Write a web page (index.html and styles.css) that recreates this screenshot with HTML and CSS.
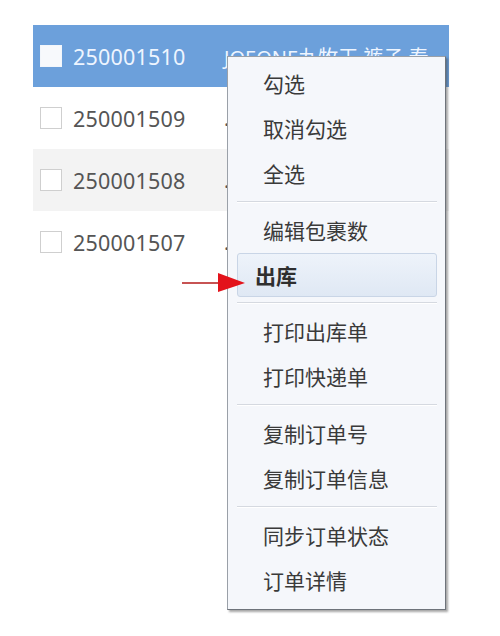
FILE: index.html
```html
<!DOCTYPE html>
<html lang="zh">
<head>
<meta charset="utf-8">
<title>订单右键菜单</title>
<link rel="stylesheet" href="styles.css">
</head>
<body>
<div class="page">
  <div class="table">
    <div class="row selected">
      <span class="check"></span>
      <span class="num">250001510</span>
      <span class="title">JOEONE九牧王 裤子 春</span>
    </div>
    <div class="row">
      <span class="check"></span>
      <span class="num">250001509</span>
      <span class="title">.</span>
    </div>
    <div class="row alt">
      <span class="check"></span>
      <span class="num">250001508</span>
      <span class="title">.</span>
    </div>
    <div class="row">
      <span class="check"></span>
      <span class="num">250001507</span>
      <span class="title">.</span>
    </div>
  </div>

  <ul class="menu">
    <li class="item">勾选</li>
    <li class="item">取消勾选</li>
    <li class="item">全选</li>
    <li class="sep"></li>
    <li class="item">编辑包裹数</li>
    <li class="item active">出库</li>
    <li class="sep"></li>
    <li class="item">打印出库单</li>
    <li class="item">打印快递单</li>
    <li class="sep"></li>
    <li class="item">复制订单号</li>
    <li class="item">复制订单信息</li>
    <li class="sep"></li>
    <li class="item">同步订单状态</li>
    <li class="item">订单详情</li>
  </ul>

  <svg class="arrow" width="66" height="22" viewBox="0 0 66 22">
    <line x1="0" y1="11" x2="40" y2="11" stroke="#b51a1a" stroke-width="1.6"/>
    <polygon points="36,1 63,11 36,20" fill="#e3131b"/>
  </svg>
</div>
</body>
</html>
```

FILE: styles.css
```css
html, body {
  margin: 0;
  padding: 0;
  background: #ffffff;
}

.page {
  position: relative;
  width: 500px;
  height: 636px;
  overflow: hidden;
  font-family: "Noto Sans", "Noto Sans CJK SC", sans-serif;
}

.table {
  position: absolute;
  left: 33px;
  top: 25px;
  width: 416px;
  display: flex;
  flex-direction: column;
}

.row {
  height: 62px;
  display: flex;
  align-items: center;
  padding-left: 7px;
  background: #ffffff;
  color: #555555;
  white-space: nowrap;
  overflow: hidden;
}

.row.selected {
  background: #6ca0db;
  color: #eef5ff;
}

.row.alt {
  background: #f3f3f3;
}

.check {
  width: 20px;
  height: 20px;
  border: 1px solid #cfcfcf;
  background: #ffffff;
  flex: none;
}

.row.selected .check {
  border-color: #f2f6fb;
  background: #f7f9fc;
}

.num {
  margin-left: 11px;
  font-size: 21.5px;
  letter-spacing: 0.2px;
  width: 151px;
  flex: none;
}

.title {
  font-size: 20px;
  font-family: "Noto Sans", "Noto Sans CJK SC", sans-serif;
}

.menu {
  position: absolute;
  left: 227px;
  top: 56px;
  width: 219px;
  margin: 0;
  padding: 4px 0 6px;
  list-style: none;
  background: #f5f7fb;
  border: 1px solid #9aa0a8;
  border-right-color: #6e737a;
  border-bottom-color: #6e737a;
  box-shadow: 2px 2px 2px rgba(60, 60, 60, 0.45);
  box-sizing: border-box;
  height: 554px;
  font-family: "Noto Sans CJK SC", sans-serif;
  font-size: 21px;
  color: #3a3a3a;
}

.item {
  height: 45px;
  line-height: 45px;
  padding-left: 35px;
  box-sizing: border-box;
  white-space: nowrap;
}

.item.active {
  margin: 0 8px 0 9px;
  height: 44px;
  line-height: 42px;
  padding-left: 17px;
  border: 1px solid #c9d5e6;
  border-radius: 3px;
  background: linear-gradient(#eef3fa, #dfe8f4);
  font-weight: bold;
  color: #2f2f2f;
}

.sep {
  height: 12px;
  margin: 0 8px 0 9px;
  position: relative;
}

.sep::before {
  content: "";
  position: absolute;
  left: 0;
  right: 0;
  top: 5px;
  height: 1px;
  background: #d5d9e0;
  border-bottom: 1px solid #ffffff;
}

.arrow {
  position: absolute;
  left: 182px;
  top: 272px;
}
```
